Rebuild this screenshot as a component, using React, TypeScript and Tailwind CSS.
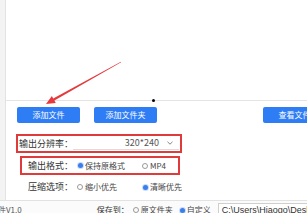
import React from "react";

function Btn({ children, className = "" }: { children: React.ReactNode; className?: string }) {
  return (
    <div
      className={`flex h-[16px] w-[63px] shrink-0 items-center justify-center rounded-[2px] bg-[#2f7df5] text-[8px] leading-[10px] text-white ${className}`}
    >
      {children}
    </div>
  );
}

function Radio({ on, label, className = "" }: { on?: boolean; label: string; className?: string }) {
  return (
    <div className={`flex shrink-0 items-center ${className}`}>
      {on ? (
        <span className="h-[5px] w-[5px] rounded-full bg-[#3a7fe9] ring-1 ring-[#c9dbf9]" />
      ) : (
        <span className="h-[6px] w-[6px] rounded-full border border-[#9a9a9a]" />
      )}
      <span className="ml-[2px] text-[8px] leading-[12px] text-[#444]">{label}</span>
    </div>
  );
}

export default function App() {
  return (
    <div className="relative h-[213px] w-[307px] overflow-hidden bg-[#f3f3f3] font-['Noto_Sans_CJK_SC',sans-serif] text-[#333]">
      <div className="ml-[5px] flex h-[200px] flex-col border-l border-[#e2e2e2] bg-white">
        {/* file list */}
        <div className="h-[101px] shrink-0 border-b border-[#e4e4e4]" />

        {/* buttons */}
        <div className="mt-[6px] flex pl-[11px]">
          <Btn>添加文件</Btn>
          <Btn className="ml-[14px]">添加文件夹</Btn>
          <Btn className="ml-[106px]">查看文件</Btn>
        </div>

        {/* resolution */}
        <div className="ml-[10px] mt-[11px] flex h-[19px] w-[166px] items-center border-2 border-[#e03b3b] pl-[1px]">
          <span className="w-[54px] shrink-0 text-[9px] leading-[12px]">输出分辨率：</span>
          <div className="flex h-[13px] w-[106px] items-center justify-end border-b border-[#dcdcdc] pr-[6px]">
            <span className="text-[9px] leading-[12px] text-[#555]">320*240</span>
            <svg className="ml-[8px]" width="6" height="4" viewBox="0 0 6 4">
              <polyline points="0.5,0.8 3,3.2 5.5,0.8" fill="none" stroke="#777" strokeWidth="0.9" />
            </svg>
          </div>
        </div>

        {/* format */}
        <div className="ml-[14px] mt-[3px] flex h-[19px] w-[160px] items-center border-2 border-[#e03b3b] pl-[6px]">
          <span className="w-[50px] shrink-0 text-[9px] leading-[12px]">输出格式：</span>
          <Radio on label="保持原格式" />
          <Radio label="MP4" className="ml-[17px]" />
        </div>

        {/* compression */}
        <div className="ml-[22px] mt-[6px] flex h-[12px] items-center">
          <span className="w-[49px] shrink-0 text-[9px] leading-[12px]">压缩选项：</span>
          <Radio label="缩小优先" />
          <Radio on label="清晰优先" className="ml-[26px]" />
        </div>
      </div>

      {/* bottom bar */}
      <div className="flex h-[13px] items-start border-t border-[#e2e2e2] bg-[#fbfbfb] text-[8px] leading-[12px] text-[#555]">
        <span className="ml-[-10px] mt-[3px] shrink-0">软件V1.0</span>
        <span className="ml-[75px] mt-[3px] shrink-0 text-[#333]">保存到：</span>
        <Radio label="原文件夹" className="ml-[4px] mt-[3px]" />
        <Radio on label="自定义" className="ml-[7px] mt-[3px]" />
        <div className="ml-[7px] mt-[2px] h-[16px] flex-1 shrink-0 border border-[#cfcfcf] bg-white pl-[3px] font-['Liberation_Sans',sans-serif] text-[9px] leading-[12px] whitespace-nowrap text-[#333]">
          C:\Users\Hiaogo\Desktop
        </div>
      </div>

      {/* annotation arrow */}
      <svg className="pointer-events-none absolute left-0 top-0" width="307" height="213" viewBox="0 0 307 213">
        <polygon
          points="46,104 55.8,103.1 54.4,100.6 121.1,62.3 120.9,61.7 53.2,98.6 51.9,96.1"
          fill="#e6393c"
        />
      </svg>

      {/* cursor dot */}
      <span className="absolute left-[152px] top-[99px] h-[3px] w-[3px] rounded-full bg-black" />
    </div>
  );
}
